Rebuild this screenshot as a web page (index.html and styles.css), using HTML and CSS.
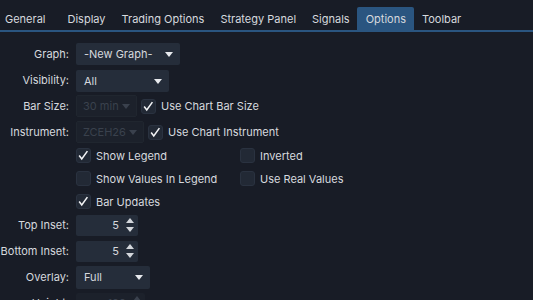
FILE: index.html
```html
<!DOCTYPE html>
<html lang="en">
<head>
    <meta charset="UTF-8">
    <title>Indicator Options</title>
    <link rel="stylesheet" href="styles.css">
</head>
<body>
    <div class="tabs">
        <div class="tab">General</div>
        <div class="tab">Display</div>
        <div class="tab">Trading Options</div>
        <div class="tab">Strategy Panel</div>
        <div class="tab">Signals</div>
        <div class="tab active">Options</div>
        <div class="tab">Toolbar</div>
    </div>

    <div class="form">
        <div class="row">
            <label class="label">Graph:</label>
            <div class="select graph">-New Graph-<span class="caret"></span></div>
        </div>
        <div class="row">
            <label class="label">Visibility:</label>
            <div class="select visibility">All<span class="caret"></span></div>
        </div>
        <div class="row">
            <label class="label">Bar Size:</label>
            <div class="select disabled barsize">30 min<span class="caret"></span></div>
            <span class="check on"><svg viewBox="0 0 15 15"><polyline points="2.5,7.5 5.5,11.5 12,2.5"/></svg></span>
            <span class="check-text">Use Chart Bar Size</span>
        </div>
        <div class="row">
            <label class="label">Instrument:</label>
            <div class="select disabled instrument">ZCEH26<span class="caret"></span></div>
            <span class="check on"><svg viewBox="0 0 15 15"><polyline points="2.5,7.5 5.5,11.5 12,2.5"/></svg></span>
            <span class="check-text">Use Chart Instrument</span>
        </div>

        <div class="checks">
            <div class="item">
                <span class="check on"><svg viewBox="0 0 15 15"><polyline points="2.5,7.5 5.5,11.5 12,2.5"/></svg></span>
                <span class="check-text">Show Legend</span>
            </div>
            <div class="item">
                <span class="check"></span>
                <span class="check-text">Inverted</span>
            </div>
            <div class="item">
                <span class="check"></span>
                <span class="check-text">Show Values In Legend</span>
            </div>
            <div class="item">
                <span class="check"></span>
                <span class="check-text">Use Real Values</span>
            </div>
            <div class="item">
                <span class="check on"><svg viewBox="0 0 15 15"><polyline points="2.5,7.5 5.5,11.5 12,2.5"/></svg></span>
                <span class="check-text">Bar Updates</span>
            </div>
        </div>

        <div class="row">
            <label class="label">Top Inset:</label>
            <div class="spinner">5<span class="arrows"><span class="up"></span><span class="down"></span></span></div>
        </div>
        <div class="row">
            <label class="label">Bottom Inset:</label>
            <div class="spinner">5<span class="arrows"><span class="up"></span><span class="down"></span></span></div>
        </div>
        <div class="row">
            <label class="label">Overlay:</label>
            <div class="select overlay">Full<span class="caret"></span></div>
        </div>
        <div class="row">
            <label class="label">Height:</label>
            <div class="spinner disabled height">100<span class="arrows"><span class="up"></span><span class="down"></span></span></div>
        </div>
    </div>
</body>
</html>
```

FILE: styles.css
```css
body {
    margin: 0;
    background-color: #181c26;
    color: #d6d9de;
    font-family: Inter, "Noto Sans", sans-serif;
    font-size: 11px;
    overflow: hidden;
}

.tabs {
    display: flex;
    align-items: flex-end;
    height: 30px;
    border-bottom: 2px solid #2a5580;
}

.tab {
    height: 23px;
    line-height: 24px;
    padding: 0 7.5px 0 8.5px;
    border-radius: 2px 2px 0 0;
}

.tab:first-child {
    padding-left: 5px;
    margin-right: 6px;
}

.tab.active {
    background-color: #2a5580;
}

.form {
    display: flex;
    flex-direction: column;
    gap: 4px;
    padding-top: 11px;
}

.row {
    display: flex;
    align-items: center;
    height: 22px;
}

.label {
    width: 69px;
    margin-right: 7px;
    text-align: right;
    white-space: nowrap;
}

.select {
    position: relative;
    box-sizing: border-box;
    height: 22px;
    line-height: 22px;
    padding-left: 8px;
    background-color: #252d3a;
    border-radius: 2px;
}

.caret {
    position: absolute;
    right: 7px;
    top: 9px;
    border-left: 4px solid transparent;
    border-right: 4px solid transparent;
    border-top: 5px solid #e8eaee;
}

.graph { width: 104px; }
.visibility { width: 93px; margin-top: 1px; }
.barsize { width: 61px; }
.instrument { width: 68px; }
.overlay { width: 74px; height: 23px; line-height: 23px; }

.select.disabled {
    background-color: #1c212b;
    border: 1px solid #20262f;
    color: #3a414d;
    line-height: 20px;
    padding-left: 6px;
}

.select.disabled .caret {
    border-top-color: #3a414d;
    top: 8px;
    right: 6px;
}

.check {
    box-sizing: border-box;
    width: 15px;
    height: 15px;
    margin: 0 5px 0 4px;
    background-color: #222935;
    border: 1px solid #2a3240;
    border-radius: 3px;
    flex-shrink: 0;
}

.check svg {
    display: block;
    width: 13px;
    height: 13px;
}

.check svg polyline {
    fill: none;
    stroke: #f2f3f5;
    stroke-width: 1.8;
}

.checks {
    display: grid;
    grid-template-columns: 164px auto;
    grid-auto-rows: 23px;
    margin: -3px 0 -3px 76px;
}

.item {
    display: flex;
    align-items: center;
}

.item .check {
    margin-left: 0;
}

.spinner {
    position: relative;
    box-sizing: border-box;
    width: 62px;
    height: 21px;
    line-height: 21px;
    padding-right: 19px;
    text-align: right;
    background-color: #252d3a;
    border-radius: 2px;
}

.arrows {
    position: absolute;
    right: 4px;
    top: 3px;
    display: flex;
    flex-direction: column;
    gap: 4px;
}

.up {
    border-left: 4px solid transparent;
    border-right: 4px solid transparent;
    border-bottom: 5px solid #d4d7dc;
}

.down {
    border-left: 4px solid transparent;
    border-right: 4px solid transparent;
    border-top: 5px solid #d4d7dc;
}

.spinner.disabled {
    width: 69px;
    background-color: #1c212b;
    color: #3a414d;
}

.spinner.disabled .up {
    border-bottom-color: #3a414d;
}

.spinner.disabled .down {
    border-top-color: #3a414d;
}
```
